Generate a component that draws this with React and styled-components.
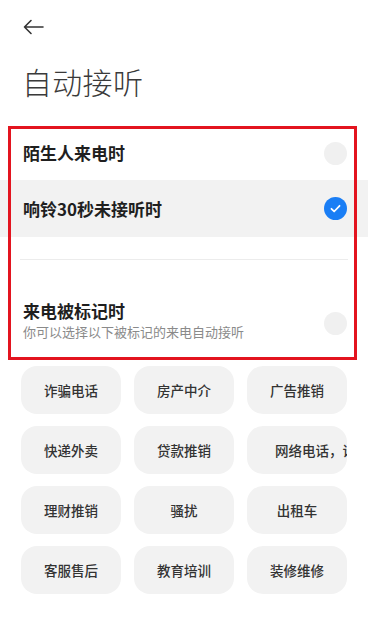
import React, { useState } from 'react';
import styled, { createGlobalStyle } from 'styled-components';

const GlobalStyle = createGlobalStyle`
  html, body {
    margin: 0;
    padding: 0;
    background: #fff;
  }
  body {
    font-family: "Noto Sans CJK SC", "Noto Sans", sans-serif;
    color: #333;
  }
`;

const Page = styled.div`
  width: 368px;
  min-height: 625px;
  background: #fff;
`;

const Header = styled.div`
  padding: 18px 22px 0;
`;

const BackButton = styled.button`
  display: flex;
  align-items: center;
  border: none;
  background: none;
  padding: 0;
  height: 18px;
  cursor: pointer;
  color: #333;
`;

const Title = styled.h1`
  margin: 25px 0 0;
  font-size: 30px;
  line-height: 40px;
  font-weight: 300;
  color: #3a3a3a;
  letter-spacing: 0.3px;
`;

const Section = styled.div`
  position: relative;
  margin-top: 25px;
`;

const Highlight = styled.div`
  position: absolute;
  top: 0;
  left: 8px;
  right: 11px;
  bottom: 0;
  border: 3px solid #e3141f;
  pointer-events: none;
`;

const Row = styled.div`
  display: flex;
  align-items: center;
  justify-content: space-between;
  padding: 0 21px 0 23px;
  height: ${(p) => p.$height}px;
  background: ${(p) => (p.$active ? '#f2f2f2' : '#fff')};
  cursor: pointer;
`;

const RowText = styled.div`
  display: flex;
  flex-direction: column;
`;

const RowTitle = styled.div`
  font-size: 17px;
  line-height: 22px;
  font-weight: 700;
  color: #1f1f1f;
`;

const RowSub = styled.div`
  margin-top: 1px;
  font-size: 13px;
  line-height: 18px;
  color: #8a8a8a;
`;

const Radio = styled.div`
  width: 23px;
  height: 23px;
  border-radius: 50%;
  background: ${(p) => (p.$checked ? '#1a7ef5' : '#f0f0f0')};
  display: flex;
  align-items: center;
  justify-content: center;
  flex-shrink: 0;
  margin-top: ${(p) => p.$offset || 0}px;
`;

const DividerWrap = styled.div`
  padding: 22px 20px 21px;
`;

const Divider = styled.div`
  height: 1px;
  background: #ececec;
`;

const ChipGrid = styled.div`
  display: grid;
  grid-template-columns: repeat(3, 100px);
  grid-auto-rows: 48px;
  column-gap: 13px;
  row-gap: 12px;
  padding: 6px 21px 20px;
`;

const Chip = styled.div`
  display: flex;
  align-items: center;
  justify-content: ${(p) => (p.$scroll ? 'flex-start' : 'center')};
  padding-left: ${(p) => (p.$scroll ? '28px' : '0')};
  background: #f2f2f2;
  border-radius: 16px;
  font-size: 13.5px;
  font-weight: 500;
  color: #333;
  white-space: nowrap;
  overflow: hidden;
`;

const options = [
  { id: 'stranger', title: '陌生人来电时', height: 54 },
  { id: 'ring', title: '响铃30秒未接听时', height: 57 },
];

const tags = [
  '诈骗电话', '房产中介', '广告推销',
  '快递外卖', '贷款推销', '网络电话，诈骗电话',
  '理财推销', '骚扰', '出租车',
  '客服售后', '教育培训', '装修维修',
];

const Check = () => (
  <svg width="13" height="13" viewBox="0 0 24 24" fill="none">
    <path d="M4.5 12.5l5 5L19.5 7" stroke="#fff" strokeWidth="3.2" strokeLinecap="round" strokeLinejoin="round" />
  </svg>
);

const App = () => {
  const [selected, setSelected] = useState('ring');

  return (
    <Page>
      <GlobalStyle />
      <Header>
        <BackButton aria-label="返回">
          <svg width="22" height="16" viewBox="0 0 22 16" fill="none">
            <path d="M21 8H2.5M9 1.5L2.5 8 9 14.5" stroke="#333" strokeWidth="1.6" strokeLinecap="round" strokeLinejoin="round" />
          </svg>
        </BackButton>
        <Title>自动接听</Title>
      </Header>

      <Section>
        {options.map((o) => (
          <Row key={o.id} $height={o.height} $active={selected === o.id} onClick={() => setSelected(o.id)}>
            <RowTitle>{o.title}</RowTitle>
            <Radio $checked={selected === o.id}>{selected === o.id && <Check />}</Radio>
          </Row>
        ))}
        <DividerWrap>
          <Divider />
        </DividerWrap>
        <Row $height={79} $active={selected === 'marked'} onClick={() => setSelected('marked')}>
          <RowText>
            <RowTitle>来电被标记时</RowTitle>
            <RowSub>你可以选择以下被标记的来电自动接听</RowSub>
          </RowText>
          <Radio $checked={selected === 'marked'} $offset={6}>{selected === 'marked' && <Check />}</Radio>
        </Row>
        <Highlight />
      </Section>

      <ChipGrid>
        {tags.map((t) => (
          <Chip key={t} $scroll={t.length > 6}>{t}</Chip>
        ))}
      </ChipGrid>
    </Page>
  );
};

export default App;
